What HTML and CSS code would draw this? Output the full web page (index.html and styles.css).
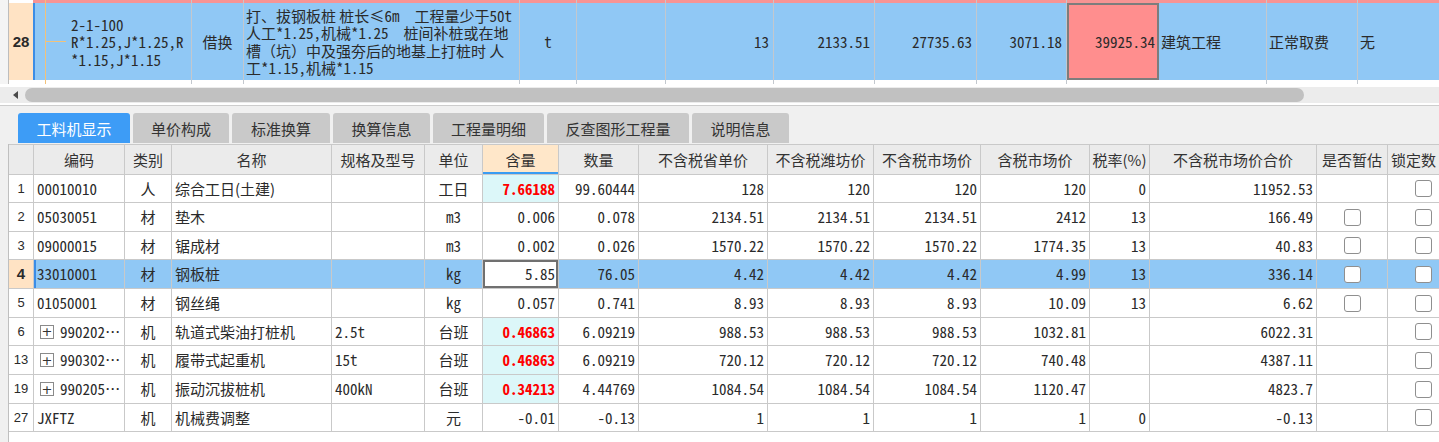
FILE: index.html
```html
<!DOCTYPE html>
<html lang="zh-CN">
<head>
<meta charset="utf-8">
<title>工料机显示</title>
<link rel="stylesheet" href="styles.css">
</head>
<body>
<div class="top">
  <div class="qrow">
    <div class="q gut"></div>
    <div class="q qrn">28</div>
    <div class="q tree">
      <span class="selbar"></span><span class="tv"></span><span class="th"></span>
      <div class="code n">2-1-100<br>R*1.25,J*1.25,R<br>*1.15,J*1.15</div>
    </div>
    <div class="q m">借换</div>
    <div class="q desc"><div>打、拔钢板桩 桩长<span class="n">≤6m&nbsp;&nbsp;</span>工程量少于<span class="n">50t</span><br>人工<span class="n">*1.25,</span>机械<span class="n">*1.25&nbsp;&nbsp;</span>桩间补桩或在地<br>槽（坑）中及强夯后的地基上打桩时 人<br>工<span class="n">*1.15,</span>机械<span class="n">*1.15</span></div></div>
    <div class="q m n">t</div>
    <div class="q"></div>
    <div class="q r n">13</div>
    <div class="q r n">2133.51</div>
    <div class="q r n">27735.63</div>
    <div class="q r n">3071.18</div>
    <div class="q red"><div class="redbox n">39925.34</div></div>
    <div class="q l">建筑工程</div>
    <div class="q l">正常取费</div>
    <div class="q l last">无</div>
  </div>
  <div class="hscroll">
    <span class="arrow"></span>
    <div class="thumb"></div>
  </div>
</div>

<div class="tabs">
  <div class="tab active">工料机显示</div>
  <div class="tab">单价构成</div>
  <div class="tab">标准换算</div>
  <div class="tab">换算信息</div>
  <div class="tab">工程量明细</div>
  <div class="tab">反查图形工程量</div>
  <div class="tab">说明信息</div>
</div>

<div class="panel">
  <div class="grid">
    <div class="row hd">
      <div class="c"></div><div class="c m">编码</div><div class="c m">类别</div><div class="c m">名称</div><div class="c m">规格及型号</div><div class="c m">单位</div><div class="c m hsel">含量</div><div class="c m">数量</div><div class="c m">不含税省单价</div><div class="c m">不含税潍坊价</div><div class="c m">不含税市场价</div><div class="c m">含税市场价</div><div class="c m">税率(%)</div><div class="c m">不含税市场价合价</div><div class="c m">是否暂估</div><div class="c l">锁定数</div>
    </div>
    <div class="row">
      <div class="c m rn">1</div><div class="c n">00010010</div><div class="c m">人</div><div class="c">综合工日(土建)</div><div class="c"></div><div class="c m">工日</div><div class="c r n hot">7.66188</div><div class="c r n">99.60444</div><div class="c r n">128</div><div class="c r n">120</div><div class="c r n">120</div><div class="c r n">120</div><div class="c r n">0</div><div class="c r n">11952.53</div><div class="c m"></div><div class="c m"><span class="cb"></span></div>
    </div>
    <div class="row">
      <div class="c m rn">2</div><div class="c n">05030051</div><div class="c m">材</div><div class="c">垫木</div><div class="c"></div><div class="c m n">m3</div><div class="c r n">0.006</div><div class="c r n">0.078</div><div class="c r n">2134.51</div><div class="c r n">2134.51</div><div class="c r n">2134.51</div><div class="c r n">2412</div><div class="c r n">13</div><div class="c r n">166.49</div><div class="c m"><span class="cb"></span></div><div class="c m"><span class="cb"></span></div>
    </div>
    <div class="row">
      <div class="c m rn">3</div><div class="c n">09000015</div><div class="c m">材</div><div class="c">锯成材</div><div class="c"></div><div class="c m n">m3</div><div class="c r n">0.002</div><div class="c r n">0.026</div><div class="c r n">1570.22</div><div class="c r n">1570.22</div><div class="c r n">1570.22</div><div class="c r n">1774.35</div><div class="c r n">13</div><div class="c r n">40.83</div><div class="c m"><span class="cb"></span></div><div class="c m"><span class="cb"></span></div>
    </div>
    <div class="row sel">
      <div class="c m rn cur">4</div><div class="c n first">33010001</div><div class="c m">材</div><div class="c">钢板桩</div><div class="c"></div><div class="c m n">kg</div><div class="c r n edit">5.85</div><div class="c r n">76.05</div><div class="c r n">4.42</div><div class="c r n">4.42</div><div class="c r n">4.42</div><div class="c r n">4.99</div><div class="c r n">13</div><div class="c r n">336.14</div><div class="c m"><span class="cb"></span></div><div class="c m"><span class="cb"></span></div>
    </div>
    <div class="row">
      <div class="c m rn">5</div><div class="c n">01050001</div><div class="c m">材</div><div class="c">钢丝绳</div><div class="c"></div><div class="c m n">kg</div><div class="c r n">0.057</div><div class="c r n">0.741</div><div class="c r n">8.93</div><div class="c r n">8.93</div><div class="c r n">8.93</div><div class="c r n">10.09</div><div class="c r n">13</div><div class="c r n">6.62</div><div class="c m"><span class="cb"></span></div><div class="c m"><span class="cb"></span></div>
    </div>
    <div class="row">
      <div class="c m rn">6</div><div class="c n"><span class="exp">+</span>990202<span class="ell">···</span></div><div class="c m">机</div><div class="c">轨道式柴油打桩机</div><div class="c n">2.5t</div><div class="c m">台班</div><div class="c r n hot">0.46863</div><div class="c r n">6.09219</div><div class="c r n">988.53</div><div class="c r n">988.53</div><div class="c r n">988.53</div><div class="c r n">1032.81</div><div class="c r n"></div><div class="c r n">6022.31</div><div class="c m"></div><div class="c m"><span class="cb"></span></div>
    </div>
    <div class="row">
      <div class="c m rn">13</div><div class="c n"><span class="exp">+</span>990302<span class="ell">···</span></div><div class="c m">机</div><div class="c">履带式起重机</div><div class="c n">15t</div><div class="c m">台班</div><div class="c r n hot">0.46863</div><div class="c r n">6.09219</div><div class="c r n">720.12</div><div class="c r n">720.12</div><div class="c r n">720.12</div><div class="c r n">740.48</div><div class="c r n"></div><div class="c r n">4387.11</div><div class="c m"></div><div class="c m"><span class="cb"></span></div>
    </div>
    <div class="row">
      <div class="c m rn">19</div><div class="c n"><span class="exp">+</span>990205<span class="ell">···</span></div><div class="c m">机</div><div class="c">振动沉拔桩机</div><div class="c n">400kN</div><div class="c m">台班</div><div class="c r n hot">0.34213</div><div class="c r n">4.44769</div><div class="c r n">1084.54</div><div class="c r n">1084.54</div><div class="c r n">1084.54</div><div class="c r n">1120.47</div><div class="c r n"></div><div class="c r n">4823.7</div><div class="c m"></div><div class="c m"><span class="cb"></span></div>
    </div>
    <div class="row">
      <div class="c m rn">27</div><div class="c n">JXFTZ</div><div class="c m">机</div><div class="c">机械费调整</div><div class="c"></div><div class="c m">元</div><div class="c r n">-0.01</div><div class="c r n">-0.13</div><div class="c r n">1</div><div class="c r n">1</div><div class="c r n">1</div><div class="c r n">1</div><div class="c r n">0</div><div class="c r n">-0.13</div><div class="c m"></div><div class="c m"><span class="cb"></span></div>
    </div>
  </div>
</div>
</body>
</html>
```
FILE: styles.css
```css
* { box-sizing: border-box; margin: 0; padding: 0; }
html, body { width: 1439px; height: 442px; overflow: hidden; }
body {
  background: #f0f0f0;
  font-family: "Noto Sans CJK SC", "Noto Sans", sans-serif;
  font-size: 15px;
  color: #2a2a2a;
}
.n { font-family: "Noto Sans Mono CJK SC", "DejaVu Sans Mono", "Noto Sans CJK SC", monospace; }

/* ---------- top grid (row 28) ---------- */
.top {
  height: 106px;
  background: #fff;
  border-bottom: 1px solid #cdcdcd;
  overflow: hidden;
}
.qrow {
  display: grid;
  grid-template-columns: 9px 24px 159px 52px 276px 57px 89px 108px 101px 102px 90px 92px 108px 91px 120px;
  height: 84px;
  width: 1560px;
}
.q {
  display: flex;
  align-items: center;
  padding: 3px 4px 4px;
  border-right: 1px solid #c3c8ce;
  background: linear-gradient(#f79494 0 3px, #90c8f5 3px 80px, #fff 80px);
  line-height: 17.5px;
  white-space: nowrap;
  overflow: hidden;
}
.q.m { justify-content: center; }
.q.r { justify-content: flex-end; }
.q.l { padding-left: 2px; }
.q.gut { background: #f4f4f4; border-right: 1px solid #bdbdbd; }
.q.qrn {
  background: linear-gradient(#fff 0 3px, #ffe3c4 3px 80px, #fff 80px);
  justify-content: center;
  font-family: "Liberation Sans", sans-serif;
  font-weight: bold;
  font-size: 15px;
  border-right: none;
}
.q.tree { position: relative; padding-left: 38px; }
.selbar { position: absolute; left: 0; top: 3px; bottom: 4px; width: 2px; background: #3b8de6; }
.tv { position: absolute; left: 12px; top: 0; bottom: 0; width: 1px; background: #f2c27a; }
.th { position: absolute; left: 12px; top: 41px; width: 21px; height: 1px; background: #f2c27a; }
.code { line-height: 17.5px; padding-top: 1px; }
.q.desc { padding-left: 2px; }
.q.red { padding: 3px 0 4px; border-right: none; }
.redbox {
  width: 100%;
  height: 77px;
  border: 2px solid #7d7d7d;
  background: #ff8e8e;
  display: flex;
  align-items: center;
  justify-content: flex-end;
  padding-right: 2px;
}
.q.last { border-right: none; }

.hscroll {
  position: relative;
  height: 16px;
  margin-top: 3px;
  background: #ececec;
}
.arrow {
  position: absolute;
  left: 13px; top: 4px;
  width: 0; height: 0;
  border-top: 4px solid transparent;
  border-bottom: 4px solid transparent;
  border-right: 5px solid #4a4a4a;
}
.thumb {
  position: absolute;
  left: 25px; top: 1px;
  width: 1279px; height: 14px;
  border-radius: 7px;
  background: #c1c1c1;
}

/* ---------- tabs ---------- */
.tabs {
  display: flex;
  gap: 3px;
  height: 38px;
  padding: 7px 0 1px 18px;
}
.tab {
  height: 30px;
  background: #c9c9c9;
  color: #333;
  border-radius: 3px 3px 0 0;
  display: flex;
  align-items: center;
  justify-content: center;
  font-size: 15px;
}
.tab:nth-child(1) { width: 112px; }
.tab:nth-child(2) { width: 96px; }
.tab:nth-child(3) { width: 98px; }
.tab:nth-child(4) { width: 97px; }
.tab:nth-child(5) { width: 111px; }
.tab:nth-child(6) { width: 142px; }
.tab:nth-child(7) { width: 97px; }
.tab.active { background: #3d9cf6; color: #fff; }

/* ---------- lower grid ---------- */
.panel {
  height: 298px;
  margin-left: 8px;
  background: #fff;
  border-left: 1px solid #bfbfbf;
  overflow: hidden;
}
.grid {
  display: grid;
  width: 1452px;
  grid-template-columns: 25px 91px 47px 160px 93px 58px 76px 80px 129px 106px 107px 109px 60px 167px 71px 72px;
  grid-template-rows: 31px 28px 29px 28px 29px 29px 28px 29px 29px 28px;
}
.row { display: contents; }
.c {
  display: flex;
  align-items: center;
  padding: 0 3px;
  border-right: 1px solid #c9c9c9;
  border-bottom: 1px solid #c9c9c9;
  white-space: nowrap;
  overflow: hidden;
  line-height: 20px;
  background: #fff;
}
.c.m { justify-content: center; }
.c.r { justify-content: flex-end; padding-right: 3px; }
.hd .c { background: #ebebeb; border-top: 1px solid #c9c9c9; color: #333; }
.hd .c.l { padding-left: 3px; }
.hd .c.hsel { background: #ffe7c9; box-shadow: inset 0 -2px 0 #3a9cf2; }
.c.rn { font-family: "Liberation Sans", sans-serif; font-size: 13px; padding: 0; }
.c.hot { background: #dcf7f9; color: #ff0000; font-weight: bold; }
.sel .c { background: #90c8f5; }
.sel .c.cur { background: #ffe3c4; font-weight: bold; font-size: 15px; }
.sel .c.first { box-shadow: inset 2px 0 0 #3b8de6; }
.sel .c.edit { background: #fff; box-shadow: inset 0 0 0 2px #707070; }
.cb {
  display: block;
  width: 17px; height: 17px;
  border: 1px solid #8f8f8f;
  border-radius: 3px;
  background: #fff;
}
.exp {
  display: inline-flex;
  align-items: center;
  justify-content: center;
  flex: none;
  width: 14px; height: 14px;
  border: 1px solid #8a8a8a;
  font-family: "DejaVu Sans", sans-serif;
  font-size: 13px;
  line-height: 1;
  margin: 0 6px 0 3px;
  color: #333;
}
.ell {
  font-family: "Liberation Sans", sans-serif;
  font-weight: bold;
  font-size: 12px;
  letter-spacing: 1px;
  margin-left: 1px;
}
```
